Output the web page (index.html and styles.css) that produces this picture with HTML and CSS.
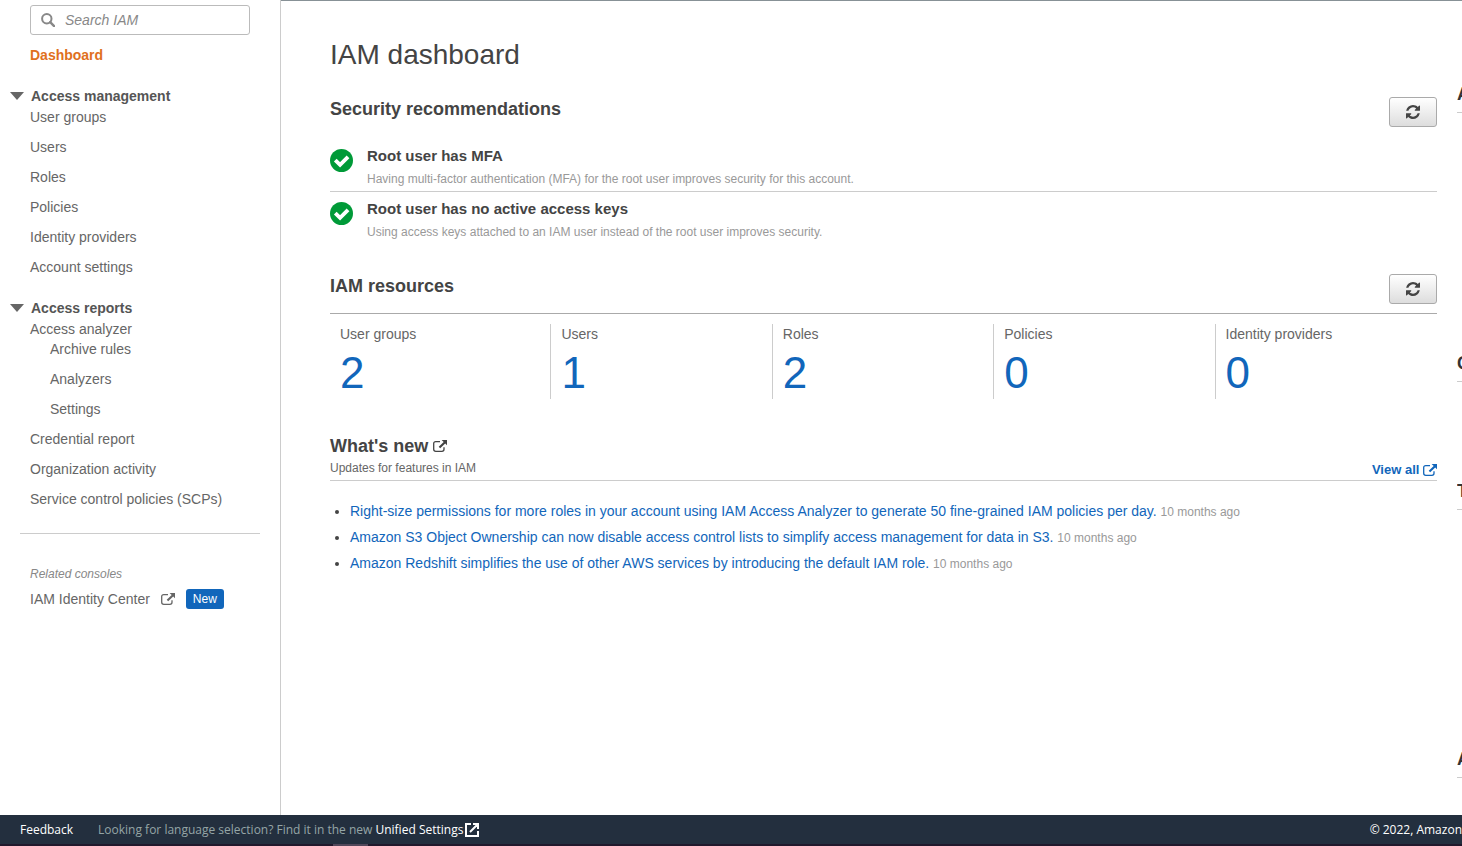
FILE: index.html
```html
<!DOCTYPE html>
<html lang="en">
<head>
<meta charset="utf-8">
<title>IAM dashboard</title>
<link rel="stylesheet" href="styles.css">
</head>
<body>
<svg class="defs" width="0" height="0" aria-hidden="true">
  <symbol id="external" viewBox="0 0 14 12">
    <path d="M7 1.600H2.800Q.7 1.600.7 3.600v5.600q0 2.100 2.100 2.100h6.100q2.100 0 2.100-2.100V7.300" fill="none" stroke="currentColor" stroke-width="1.300"/>
    <path d="M8.600 0H14v5.200l-1.800-1.700-5 4.800-1.500-1.500 5-4.800z" fill="currentColor"/>
  </symbol>
  <symbol id="refresh" viewBox="0 0 1536 1536">
    <path fill="currentColor" d="M1511 928q0 5-1 7-64 268-268 434.500T764 1536q-146 0-282.500-55T238 1324l-129 129q-19 19-45 19t-45-19-19-45V960q0-26 19-45t45-19h448q26 0 45 19t19 45-19 45l-137 137q71 66 161 102t187 36q134 0 250-65t186-179q11-17 53-117 8-23 30-23h192q13 0 22.500 9.500t9.500 22.500zm25-800v448q0 26-19 45t-45 19h-448q-26 0-45-19t-19-45 19-45l138-138Q969 256 768 256q-134 0-250 65T332 500q-11 17-53 117-8 23-30 23H50q-13 0-22.500-9.500T18 608v-7q65-268 270-434.500T768 0q146 0 284 55.500T1297 212l130-129q19-19 45-19t45 19 19 45z"/>
  </symbol>
  <symbol id="check" viewBox="0 0 24 24">
    <circle cx="12" cy="12" r="12" fill="#009a38"/>
    <path d="M5.500 11.600l5 5L18.800 8.300" fill="none" stroke="#fff" stroke-width="4"/>
  </symbol>
</svg>
<div class="shell">
  <nav class="sidebar" aria-label="IAM">
    <label class="search">
      <svg width="14" height="14" viewBox="0 0 14 14" aria-hidden="true"><circle cx="5.800" cy="5.800" r="4.700" fill="none" stroke="currentColor" stroke-width="2"/><path d="M9.200 9.200l3.900 3.900" stroke="currentColor" stroke-width="2.400" stroke-linecap="round"/></svg>
      <input type="text" placeholder="Search IAM" aria-label="Search IAM">
    </label>
    <a class="current" href="#">Dashboard</a>
    <button class="group" type="button"><span class="caret"></span>Access management</button>
    <ul class="links">
      <li><a href="#">User groups</a></li>
      <li><a href="#">Users</a></li>
      <li><a href="#">Roles</a></li>
      <li><a href="#">Policies</a></li>
      <li><a href="#">Identity providers</a></li>
      <li><a href="#">Account settings</a></li>
    </ul>
    <button class="group" type="button"><span class="caret"></span>Access reports</button>
    <ul class="links">
      <li><a href="#">Access analyzer</a>
        <ul class="links sub">
          <li><a href="#">Archive rules</a></li>
          <li><a href="#">Analyzers</a></li>
          <li><a href="#">Settings</a></li>
        </ul>
      </li>
      <li><a href="#">Credential report</a></li>
      <li><a href="#">Organization activity</a></li>
      <li><a href="#">Service control policies (SCPs)</a></li>
    </ul>
    <hr>
    <p class="related">Related consoles</p>
    <a class="console" href="#">IAM Identity Center <svg class="ext"><use href="#external"/></svg><span class="badge">New</span></a>
  </nav>
  <main class="main">
    <div class="content">
      <h1>IAM dashboard</h1>
      <section class="security">
        <header class="bar">
          <h2>Security recommendations</h2>
          <button class="refresh" type="button" aria-label="Refresh recommendations"><svg><use href="#refresh"/></svg></button>
        </header>
        <ul class="recs">
          <li><svg><use href="#check"/></svg><div><h3>Root user has MFA</h3><p>Having multi-factor authentication (MFA) for the root user improves security for this account.</p></div></li>
          <li><svg><use href="#check"/></svg><div><h3>Root user has no active access keys</h3><p>Using access keys attached to an IAM user instead of the root user improves security.</p></div></li>
        </ul>
      </section>
      <section class="resources">
        <header class="bar ruled">
          <h2>IAM resources</h2>
          <button class="refresh" type="button" aria-label="Refresh resources"><svg><use href="#refresh"/></svg></button>
        </header>
        <div class="tiles">
          <div class="tile"><span>User groups</span><a href="#">2</a></div>
          <div class="tile"><span>Users</span><a href="#">1</a></div>
          <div class="tile"><span>Roles</span><a href="#">2</a></div>
          <div class="tile"><span>Policies</span><a href="#">0</a></div>
          <div class="tile"><span>Identity providers</span><a href="#">0</a></div>
        </div>
      </section>
      <section class="news">
        <header class="newsbar">
          <div><h2>What's new <svg class="ext"><use href="#external"/></svg></h2><p>Updates for features in IAM</p></div>
          <a href="#">View all <svg class="ext"><use href="#external"/></svg></a>
        </header>
        <ul>
          <li><a href="#">Right-size permissions for more roles in your account using IAM Access Analyzer to generate 50 fine-grained IAM policies per day.</a> <small>10 months ago</small></li>
          <li><a href="#">Amazon S3 Object Ownership can now disable access control lists to simplify access management for data in S3.</a> <small>10 months ago</small></li>
          <li><a href="#">Amazon Redshift simplifies the use of other AWS services by introducing the default IAM role.</a> <small>10 months ago</small></li>
        </ul>
      </section>
    </div>
    <aside class="side">
      <h2>AWS Account</h2>
      <h2>Quick Links</h2>
      <h2>Tools</h2>
      <h2>Additional information</h2>
    </aside>
  </main>
</div>
<footer class="footer">
  <div class="footrow">
    <a class="feedback" href="#">Feedback</a>
    <span>Looking for language selection? Find it in the new <a href="#">Unified Settings</a></span>
    <svg width="14" height="14" viewBox="0 0 14 14" aria-hidden="true"><path d="M6 1H1v12h12V8M8 1h5v5M12.500 1.500L5 9" fill="none" stroke="#fff" stroke-width="2"/></svg>
    <span class="copy">© 2022, Amazon</span>
  </div>
  <div class="strip"><i></i></div>
</footer>
</body>
</html>
```
FILE: styles.css
```css
* { box-sizing: border-box; }
body {
  margin: 0;
  min-height: 100vh;
  display: flex;
  flex-direction: column;
  font: 14px/20px "Liberation Sans", Arial, sans-serif;
  color: #444;
  background: #fff;
  overflow-x: hidden;
}
h1, h2, h3, p, ul { margin: 0; padding: 0; }
ul { list-style: none; }
a { color: #1166bb; text-decoration: none; }
button { font: inherit; cursor: pointer; }
.defs { position: absolute; }
.ext { width: 14px; height: 12px; }

.shell { flex: 1; display: flex; }
.sidebar {
  flex: 0 0 281px;
  padding: 5px 20px 0 30px;
  border-right: 1px solid #ccc;
}
.sidebar a { color: #666; }
.search {
  display: flex;
  align-items: center;
  gap: 10px;
  width: 220px;
  height: 30px;
  padding: 0 10px;
  margin-bottom: 10px;
  border: 1px solid #bbb;
  border-radius: 3px;
  color: #888;
}
.search input {
  flex: 1;
  min-width: 0;
  border: 0;
  padding: 0;
  outline: 0;
  font: inherit;
  font-style: italic;
  color: #444;
}
.search input::placeholder { color: #888; opacity: 1; }
.sidebar .current { display: block; color: #e07020; font-weight: bold; }
.group {
  display: flex;
  align-items: center;
  gap: 7px;
  margin: 21px 0 1px -20px;
  padding: 0;
  border: 0;
  background: none;
  color: #555;
  font-weight: bold;
}
.caret {
  border: 7px solid transparent;
  border-top: 8px solid #666;
  border-bottom: 0;
}
.links { display: grid; gap: 10px; }
.links a { display: block; }
.sub { padding-left: 20px; }
.sidebar hr {
  margin: 24px 0 30px -10px;
  border: 0;
  border-top: 1px solid #ccc;
}
.related { font-size: 12px; font-style: italic; color: #888; margin-bottom: 5px; }
.console { display: flex; align-items: center; }
.console .ext { margin: 0 11px; }
.badge {
  padding: 0 7px;
  border-radius: 3px;
  background: #1166bb;
  color: #fff;
  font-size: 12px;
}

.main {
  flex: 1;
  min-width: 0;
  display: flex;
  gap: 20px;
  padding: 36px 0 0 49px;
  border-top: 1px solid #879196;
  overflow: hidden;
}
.content { flex: 1; min-width: 0; }
h1 { font-size: 28px; line-height: 36px; font-weight: normal; }
h2 { font-size: 18px; line-height: 24px; }
.security { margin-top: 24px; }
.bar { display: flex; justify-content: space-between; }
.refresh {
  width: 48px;
  height: 30px;
  padding: 0;
  display: grid;
  place-items: center;
  border: 1px solid #aaa;
  border-radius: 3px;
  background: linear-gradient(#fff, #ddd);
  color: #444;
}
.refresh svg { width: 14px; height: 14px; }
.recs { margin-top: 12px; }
.recs li { display: flex; gap: 14px; padding: 7px 0 2px; border-bottom: 1px solid #ccc; }
.recs li:last-child { border-color: transparent; }
.recs svg { width: 23px; height: 23px; margin-top: 3px; }
.recs h3 { font-size: 15px; line-height: 20px; margin-bottom: 3px; }
.recs p { font-size: 12px; color: #999; }
.resources { margin-top: 29px; }
.ruled { padding-bottom: 9px; border-bottom: 1px solid #aaa; }
.tiles { display: grid; grid-template-columns: repeat(5, 1fr); margin-top: 10px; }
.tile { height: 75px; padding-left: 10px; border-right: 1px solid #ccc; color: #666; }
.tile:last-child { border: 0; }
.tile span, .tile a { display: block; }
.tile a { margin-top: 5px; font-size: 44px; line-height: 48px; }
.news { margin-top: 35px; }
.newsbar { display: flex; justify-content: space-between; align-items: flex-end; border-bottom: 1px solid #ccc; }
.newsbar p { font-size: 12px; color: #666; padding-bottom: 2px; }
.newsbar > a { font-size: 13px; font-weight: bold; }
.newsbar .ext { vertical-align: 0; }
.newsbar > a .ext { vertical-align: -2px; }
.news ul { margin-top: 20px; padding-left: 20px; list-style: disc; }
.news li { height: 26px; }
.news small { font-size: 12px; line-height: 16px; color: #999; }
.side { flex: 0 0 5px; padding-top: 45px; overflow: hidden; white-space: nowrap; }
.side h2 { width: 240px; height: 31px; border-bottom: 1px solid #ccc; color: #333; }
.side h2:nth-child(2) { margin-top: 238px; }
.side h2:nth-child(3) { margin-top: 97px; }
.side h2:nth-child(4) { margin-top: 237px; }

.footer {
  background: #232f3e;
  color: #fff;
  font: 12px/29px "Open Sans", "Noto Sans", sans-serif;
}
.footer a { color: #fff; font-weight: 500; }
.footrow { display: flex; align-items: center; height: 29px; padding-left: 20px; color: #95a5a6; }
.feedback { margin-right: 25px; }
.footrow svg { margin-left: 2px; }
.copy { margin-left: auto; color: #fff; font-weight: 500; }
.strip { height: 2px; background: #21192c; }
.strip i { display: block; width: 35px; height: 2px; margin-left: 333px; background: #51475a; }
```
